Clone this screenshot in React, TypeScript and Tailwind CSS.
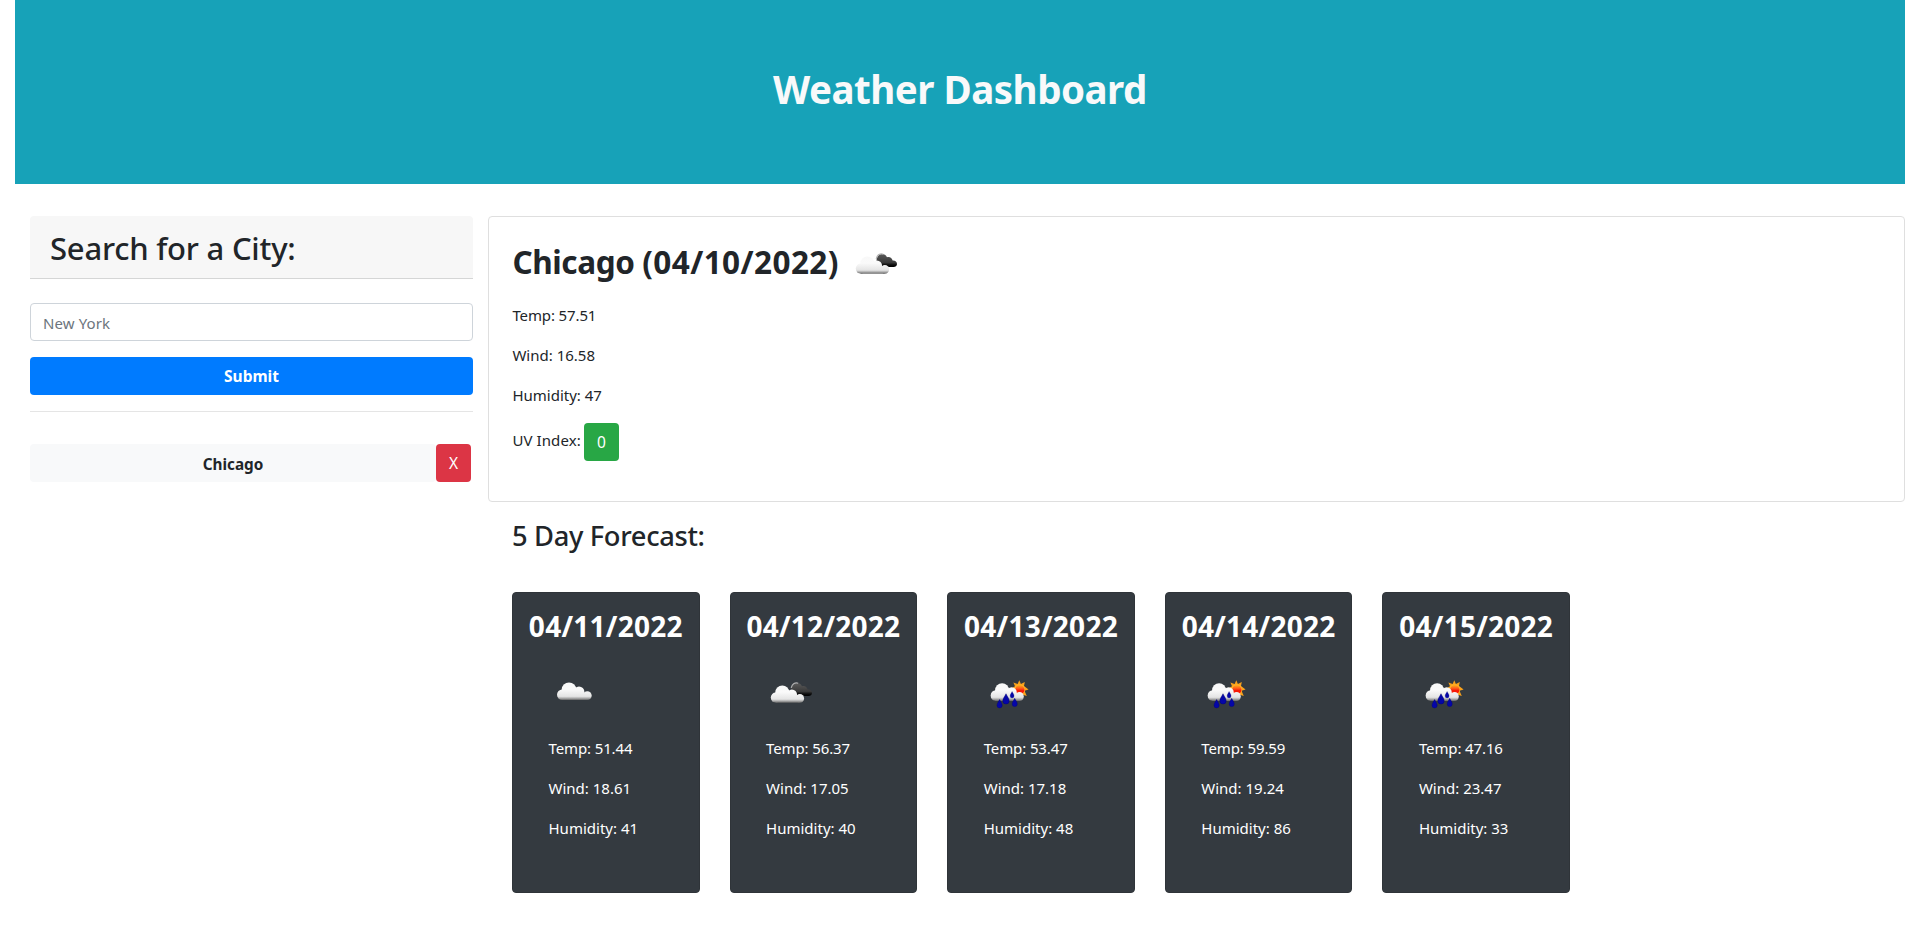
import type { ReactNode } from 'react';

type IconKind = 'cloud' | 'broken' | 'rain';

const DROP = 'M0 -5C1.2 -2.4 3 -0.6 3 1.8A3 3 0 0 1 -3 1.8C-3 -0.6 -1.2 -2.4 0 -5Z';

function Gradients({ id }: { id: string }) {
  return (
    <defs>
      <linearGradient id={`${id}-light`} gradientUnits="userSpaceOnUse" x1="0" y1="16" x2="0" y2="34">
        <stop offset="0" stopColor="#f8f8f8" />
        <stop offset="0.4" stopColor="#fafafa" />
        <stop offset="0.8" stopColor="#e4e4e4" />
        <stop offset="0.9" stopColor="#adadad" />
        <stop offset="1" stopColor="#666666" />
      </linearGradient>
      <linearGradient id={`${id}-dark`} x1="0" y1="0" x2="0" y2="1">
        <stop offset="0" stopColor="#5a5a5a" />
        <stop offset="0.65" stopColor="#3a3a3a" />
        <stop offset="0.85" stopColor="#0c0c0c" />
        <stop offset="1" stopColor="#000000" />
      </linearGradient>
      <linearGradient id={`${id}-sun`} x1="0" y1="0" x2="0" y2="1">
        <stop offset="0" stopColor="#ffae19" />
        <stop offset="0.35" stopColor="#ff5a1a" />
        <stop offset="0.6" stopColor="#f51505" />
        <stop offset="1" stopColor="#ff3010" />
      </linearGradient>
    </defs>
  );
}

function LightCloud({ fill, transform }: { fill: string; transform?: string }) {
  return (
    <g fill={fill} transform={transform}>
      <circle cx="13.2" cy="28.7" r="5.2" />
      <circle cx="20" cy="23.8" r="7.4" />
      <circle cx="30" cy="25.8" r="5.4" />
      <circle cx="38.3" cy="29.6" r="4.4" />
      <path d="M14 24H30L38 28V34H13.2L12 32Z" />
    </g>
  );
}

function WeatherIcon({ kind, id }: { kind: IconKind; id: string }) {
  const light = `url(#${id}-light)`;
  return (
    <svg viewBox="0 0 50 50" className="block size-[50px] shrink-0">
      <Gradients id={id} />
      {kind === 'cloud' && <LightCloud fill={light} />}
      {kind === 'broken' && (
        <>
          <path
            d="M28.5 29.9C25.8 27.8 25 25.4 25.6 22.6C26.1 19.2 28.2 17.1 30.8 17.1C33.3 17.1 35 18.3 36 20.2C38.6 19.3 41.2 21 41.6 23.6C44.2 23.4 46 24.8 46 26.9C46 28.9 44.4 29.9 42.6 29.9Z"
            fill={`url(#${id}-dark)`}
          />
          <path d="M25.2 21.8C26.3 18 29.2 15.9 32.2 17.2" fill="none" stroke="#b0b0b0" strokeWidth="1.2" />
          <LightCloud fill={light} transform="translate(-2.9 3.4) scale(0.96 0.98)" />
        </>
      )}
      {kind === 'rain' && (
        <>
          <polygon
            points="35.3,14.2 36.9,18 40.8,16 40,20.1 44.6,23.4 40.5,24.8 42.8,30 38,28.6 35.6,32 33,28.6 28.6,30 30.6,25 27.2,22.6 31,20.2 29.4,16.4 33.6,18"
            fill="#f9a11b"
          />
          <circle cx="35.7" cy="23.6" r="5.4" fill="#ffb52b" />
          <circle cx="35.8" cy="23.8" r="4.7" fill={`url(#${id}-sun)`} />
          <LightCloud fill={light} transform="translate(-1 0.6) scale(0.955 1.01)" />
          <g fill="#0506a8" stroke="#02026e" strokeWidth="0.4">
            <path d={DROP} transform="translate(15.6 37.8) scale(0.87 0.87)" />
            <path d={DROP} transform="translate(22 33) scale(1.06 1.05)" />
            <path d={DROP} transform="translate(28.1 28.8) scale(0.65 0.65)" />
            <path d={DROP} transform="translate(30.7 36.5) scale(0.85 0.85)" />
          </g>
        </>
      )}
    </svg>
  );
}

function Line({ children, tight = false }: { children: ReactNode; tight?: boolean }) {
  return <p className={tight ? 'mb-4 tracking-[-0.12px]' : 'mb-4'}>{children}</p>;
}

const days: { date: string; kind: IconKind; temp: string; wind: string; humidity: string }[] = [
  { date: '04/11/2022', kind: 'cloud', temp: '51.44', wind: '18.61', humidity: '41' },
  { date: '04/12/2022', kind: 'broken', temp: '56.37', wind: '17.05', humidity: '40' },
  { date: '04/13/2022', kind: 'rain', temp: '53.47', wind: '17.18', humidity: '48' },
  { date: '04/14/2022', kind: 'rain', temp: '59.59', wind: '19.24', humidity: '86' },
  { date: '04/15/2022', kind: 'rain', temp: '47.16', wind: '23.47', humidity: '33' },
];

export default function App() {
  return (
    <div className="min-h-screen bg-white px-[15px] font-['Noto_Sans',sans-serif] text-[15px] leading-6 text-[#212529]">
      <header className="flex h-[184px] justify-center bg-[#17a2b8] pt-[65px]">
        <h1 className="text-[38.5px] leading-[48px] font-bold tracking-[-0.5px] text-[#f8f9fa]">Weather Dashboard</h1>
      </header>

      <main className="mt-8 flex items-start">
        <aside className="w-[473px] shrink-0 px-[15px]">
          <div className="h-[63px] rounded-t border-b border-[#d5d6d6] bg-[#f7f7f7] px-5 pt-[13px]">
            <h2 className="text-[31px] leading-[38.4px] font-medium tracking-[-0.22px]">Search for a City:</h2>
          </div>
          <form className="mt-6 flex flex-col gap-4" onSubmit={(e) => e.preventDefault()}>
            <input
              type="text"
              placeholder="New York"
              className="h-[38px] w-full rounded border border-[#ced4da] bg-white px-3 pt-[1px] tracking-[0.1px] placeholder:text-[#6c757d]"
            />
            <button type="submit" className="h-[38px] rounded bg-[#007bff] text-[15.5px] font-bold text-white">
              Submit
            </button>
          </form>
          <hr className="mt-4 border-t border-[#e5e5e5]" />
          <div className="mt-8 flex pr-[2px]">
            <button className="h-[38px] grow rounded bg-[#f8f9fa] pt-px text-[15.3px] font-bold">Chicago</button>
            <button className="h-[38px] w-[35px] rounded bg-[#dc3545] text-[15.5px] text-white">X</button>
          </div>
        </aside>

        <div className="grow">
          <section className="h-[286px] rounded border border-[#dfdfdf] pt-5 pr-6 pl-[23.4px]">
            <div className="mb-4 flex h-[50px] items-center">
              <h2 className="w-[339px] text-[31.5px] leading-[38px] font-bold tracking-[0.42px] whitespace-nowrap">
                <span className="tracking-[-0.4px]">Chicago </span>(04/10/2022)
              </h2>
              <WeatherIcon kind="broken" id="today" />
            </div>
            <Line tight>Temp: 57.51</Line>
            <Line>Wind: 16.58</Line>
            <Line>Humidity: 47</Line>
            <div className="flex">
              <span className="w-[71.6px] pt-[5px] tracking-[0.1px]">UV Index:</span>
              <button className="h-[38px] w-[35px] rounded bg-[#28a745] text-[15.5px] text-white">0</button>
            </div>
          </section>

          <section className="pl-6">
            <h3 className="mt-[17px] text-[27.3px] leading-[34px] font-medium tracking-[-0.34px]">5 Day Forecast:</h3>
            <div className="mt-[39px] flex gap-[30px]">
              {days.map((day) => (
                <article key={day.date} className="h-[301px] w-[187.6px] rounded border border-[#2f3439] bg-[#343a40] text-white">
                  <h4 className="mt-4 text-center text-[28px] leading-[34px] font-bold tracking-[0.25px] whitespace-nowrap">{day.date}</h4>
                  <div className="mt-[23px] pl-[35.5px]">
                    <WeatherIcon kind={day.kind} id={`day-${day.date.slice(3, 5)}`} />
                    <div className="pt-5">
                      <Line tight>Temp: {day.temp}</Line>
                      <Line>Wind: {day.wind}</Line>
                      <Line>Humidity: {day.humidity}</Line>
                    </div>
                  </div>
                </article>
              ))}
            </div>
          </section>
        </div>
      </main>
    </div>
  );
}
